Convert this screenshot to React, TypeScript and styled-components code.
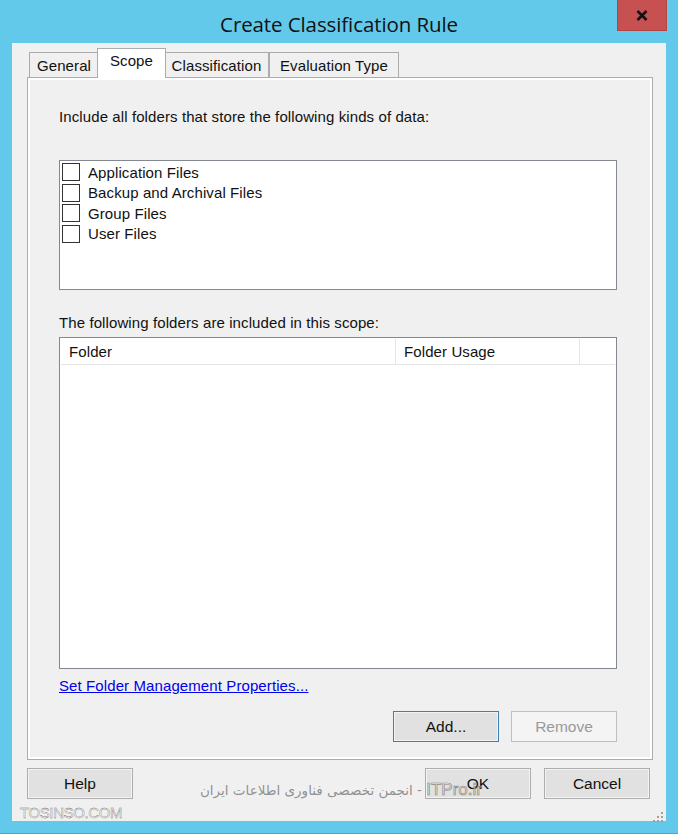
import React from "react";
import styled, { createGlobalStyle } from "styled-components";

const Global = createGlobalStyle`
  html, body { margin: 0; padding: 0; }
  body { width: 678px; height: 834px; overflow: hidden; background: #62c9ea; }
  * { box-sizing: border-box; }
`;

const UI_FONT = `"Liberation Sans", Arial, sans-serif`;

const Window = styled.div`
  width: 678px;
  height: 834px;
  background: #62c9ea;
  display: flex;
  flex-direction: column;
  padding: 0 12px 12px 12px;
  border-bottom: 1px solid #4aa7cc;
`;

const TitleBar = styled.div`
  height: 44px;
  display: grid;
  grid-template-columns: 1fr auto 1fr;
  align-items: start;
`;

const Title = styled.div`
  grid-column: 2;
  margin-top: 10px;
  font-family: "Open Sans", "Noto Sans", sans-serif;
  font-size: 20.5px;
  line-height: 28px;
  color: #111;
  letter-spacing: -0.1px;
`;

const CloseButton = styled.div`
  grid-column: 3;
  justify-self: end;
  margin-right: -1px;
  width: 50px;
  height: 31px;
  background: #c75050;
  border: 1px solid #b24444;
  border-top: none;
  display: flex;
  align-items: center;
  justify-content: center;
`;

const Client = styled.div`
  flex: 1;
  background: #f0f0f0;
  display: flex;
  flex-direction: column;
  padding: 5px 13px 0 15px;
  position: relative;
`;

const Tabs = styled.div`
  display: flex;
  flex-direction: column;
  width: 626px;
`;

const TabStrip = styled.div`
  display: flex;
  align-items: flex-end;
  height: 30px;
  padding-left: 2px;
  position: relative;
  z-index: 1;
  margin-bottom: -1px;
`;

const Tab = styled.div<{ $active?: boolean; $w: number }>`
  font-family: ${UI_FONT};
  font-size: 15px;
  letter-spacing: 0.1px;
  color: #111;
  width: ${(p) => p.$w}px;
  flex: none;
  text-align: center;
  height: ${(p) => (p.$active ? "30px" : "26px")};
  padding-top: ${(p) => (p.$active ? "3px" : "4px")};
  margin: ${(p) => (p.$active ? "0 -2px" : "0")};
  background: ${(p) => (p.$active ? "#ffffff" : "#f0f0f0")};
  border: 1px solid #acacac;
  border-bottom: ${(p) => (p.$active ? "none" : "1px solid #acacac")};
  position: relative;
  z-index: ${(p) => (p.$active ? 2 : 1)};
  white-space: nowrap;
`;

const Panel = styled.div`
  height: 683px;
  border: 1px solid #acacac;
  box-shadow: inset 0 0 0 2px #ffffff;
  background: #f0f0f0;
  display: flex;
  flex-direction: column;
  padding: 30px 35px 17px 31px;
`;

const Label = styled.div`
  font-family: ${UI_FONT};
  font-size: 15px;
  letter-spacing: 0.1px;
  color: #111;
  line-height: 18px;
`;

const CheckList = styled.div`
  margin-top: 34px;
  height: 130px;
  background: #fff;
  border: 1px solid #828790;
  padding: 1px 2px;
  display: flex;
  flex-direction: column;
`;

const CheckRow = styled.label`
  display: flex;
  align-items: center;
  height: 20.5px;
  gap: 8px;
  font-family: ${UI_FONT};
  font-size: 15px;
  letter-spacing: 0.1px;
  color: #111;
`;

const Box = styled.span`
  width: 18px;
  height: 18px;
  border: 1px solid #333;
  background: #fff;
  flex: none;
`;

const SectionLabel = styled(Label)`
  margin-top: 24px;
`;

const ListView = styled.div`
  margin-top: 5px;
  height: 332px;
  background: #fff;
  border: 1px solid #828790;
  padding: 1px;
  display: flex;
  flex-direction: column;
`;

const Header = styled.div`
  display: flex;
  height: 26px;
  border-bottom: 1px solid #e5e5e5;
`;

const HeaderCell = styled.div<{ $w?: number }>`
  width: ${(p) => (p.$w ? `${p.$w}px` : "auto")};
  flex: ${(p) => (p.$w ? "none" : "1")};
  border-right: ${(p) => (p.$w ? "1px solid #e5e5e5" : "none")};
  font-family: ${UI_FONT};
  font-size: 15px;
  letter-spacing: 0.1px;
  color: #111;
  padding: 4px 0 0 8px;
`;

const Link = styled.a`
  margin-top: 7px;
  font-family: ${UI_FONT};
  font-size: 15px;
  letter-spacing: 0.1px;
  color: #0000ee;
  text-decoration: underline;
  line-height: 20px;
  align-self: flex-start;
  cursor: pointer;
`;

const ButtonRow = styled.div`
  display: flex;
  justify-content: flex-end;
  gap: 12px;
  margin-top: auto;
`;

const Button = styled.div<{ $focused?: boolean; $disabled?: boolean }>`
  width: 106px;
  height: 31px;
  display: flex;
  align-items: center;
  justify-content: center;
  font-family: ${UI_FONT};
  font-size: 15.5px;
  color: ${(p) => (p.$disabled ? "#9a9a9a" : "#111")};
  background: ${(p) => (p.$disabled ? "#f4f4f4" : "#e1e1e1")};
  border: 1px solid
    ${(p) => (p.$focused ? "#3c7fb1" : p.$disabled ? "#bfbfbf" : "#adadad")};
  box-shadow: ${(p) => (p.$disabled ? "none" : "inset 0 0 0 1px #f3f3f3")};
`;

const Footer = styled.div`
  display: flex;
  align-items: center;
  margin-top: 8px;
  padding-right: 3px;
`;

const FooterRight = styled.div`
  margin-left: auto;
  display: flex;
  gap: 13px;
`;

const BottomLine = styled.div`
  display: flex;
  align-items: center;
  justify-content: space-between;
  margin-top: 5px;
  margin-left: -7px;
  margin-right: -11px;
`;

const Brand = styled.div`
  font-family: "Liberation Sans", Arial, sans-serif;
  font-size: 15px;
  letter-spacing: -0.4px;
  color: #fafafa;
  -webkit-text-stroke: 0.35px #6a6a6a;
`;

const Grip = styled.svg`
  margin-bottom: -8px;
`;

const Watermark = styled.div`
  position: absolute;
  left: 190px;
  top: 737px;
  width: 280px;
  direction: rtl;
  font-family: "DejaVu Sans", sans-serif;
  font-size: 13.5px;
  color: rgba(120, 120, 120, 0.8);
  white-space: nowrap;
  pointer-events: none;
`;

const Latin = styled.span`
  font-family: "Liberation Sans", Arial, sans-serif;
  font-size: 17px;
  color: rgba(240, 240, 240, 0.6);
  -webkit-text-stroke: 0.7px rgba(110, 110, 110, 0.8);
`;

const items = [
  "Application Files",
  "Backup and Archival Files",
  "Group Files",
  "User Files",
];

const tabs: { label: string; w: number; active?: boolean }[] = [
  { label: "General", w: 70 },
  { label: "Scope", w: 69, active: true },
  { label: "Classification", w: 105 },
  { label: "Evaluation Type", w: 130 },
];

export default function App() {
  return (
    <>
      <Global />
      <Window>
        <TitleBar>
          <Title>Create Classification Rule</Title>
          <CloseButton>
            <svg width="12" height="11" viewBox="0 0 12 11">
              <path d="M1.5 1 L10.5 10 M10.5 1 L1.5 10" stroke="#111" strokeWidth="2.6" />
            </svg>
          </CloseButton>
        </TitleBar>
        <Client>
          <Tabs>
            <TabStrip>
              {tabs.map((t) => (
                <Tab key={t.label} $w={t.w} $active={t.active}>
                  {t.label}
                </Tab>
              ))}
            </TabStrip>
            <Panel>
              <Label>Include all folders that store the following kinds of data:</Label>
              <CheckList>
                {items.map((t) => (
                  <CheckRow key={t}>
                    <Box />
                    {t}
                  </CheckRow>
                ))}
              </CheckList>
              <SectionLabel>The following folders are included in this scope:</SectionLabel>
              <ListView>
                <Header>
                  <HeaderCell $w={335}>Folder</HeaderCell>
                  <HeaderCell $w={184}>Folder Usage</HeaderCell>
                  <HeaderCell />
                </Header>
              </ListView>
              <Link>Set Folder Management Properties...</Link>
              <ButtonRow>
                <Button $focused>Add...</Button>
                <Button $disabled>Remove</Button>
              </ButtonRow>
            </Panel>
          </Tabs>
          <Footer>
            <Button>Help</Button>
            <FooterRight>
              <Button>OK</Button>
              <Button>Cancel</Button>
            </FooterRight>
          </Footer>
          <BottomLine>
            <Brand>TOSINSO.COM</Brand>
            <Grip width="12" height="12" viewBox="0 0 12 12">
              {[
                [9, 1], [9, 5], [5, 5], [9, 9], [5, 9], [1, 9],
              ].map(([x, y]) => (
                <rect key={`${x}-${y}`} x={x} y={y} width="2" height="2" fill="#a0a0a0" />
              ))}
            </Grip>
          </BottomLine>
          <Watermark>
            <Latin>ITPro.ir</Latin> - انجمن تخصصی فناوری اطلاعات ایران
          </Watermark>
        </Client>
      </Window>
    </>
  );
}
